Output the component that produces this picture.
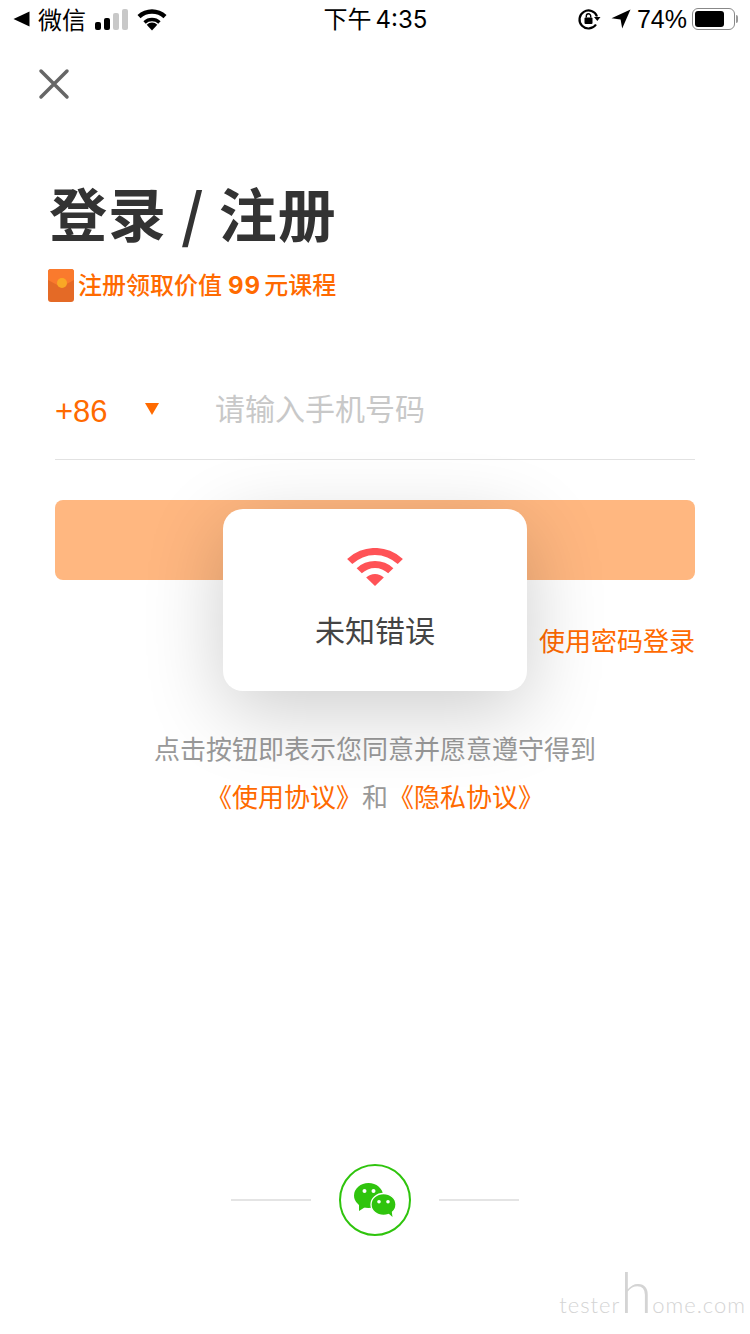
<div class="page">
	<header class="status">
		<div class="status-left">
			<svg class="back" width="17" height="16" viewBox="0 0 17 16"><path d="M16.500 0.500V15.500L0.500 8Z" fill="#000" /></svg>
			<span class="carrier">微信</span>
			<div class="signal"><i class="on h1"></i><i class="on h2"></i><i class="h3"></i><i class="h4"></i></div>
			<svg class="wifi" width="30" height="23" viewBox="0 0 30 23">
				<path d="M15 22.500 9.700 16.800a7.500 7.500 0 0 1 10.600 0Z" fill="#000" />
				<path d="M6.400 13.300a12.500 12.500 0 0 1 17.200 0l-2.300 2.500a9.200 9.200 0 0 0-12.600 0Z" fill="#000" />
				<path d="M0.500 7a21 21 0 0 1 29 0l-3 3.200a17 17 0 0 0-23 0Z" fill="#000" />
			</svg>
		</div>
		<div class="clock">下午<span>4:35</span></div>
		<div class="status-right">
			<svg class="rotate" width="24" height="24" viewBox="0 0 24 24">
				<path d="M20 9.500A9 9 0 1 0 19 17.500" fill="none" stroke="#000" stroke-width="2.200" />
				<path d="M17 10h6.500l-3.200 4Z" fill="#000" />
				<rect x="7.500" y="10.500" width="8" height="6.500" rx="1" fill="#000" />
				<path d="M9.300 10.500V9a2.200 2.200 0 0 1 4.400 0v1.500" fill="none" stroke="#000" stroke-width="1.400" />
			</svg>
			<svg class="loc" width="20" height="20" viewBox="0 0 20 20"><path d="M19.500 0.500 0.500 9.200 9.600 10.600 11.200 19.600Z" fill="#000" /></svg>
			<span class="pct">74%</span>
			<div class="battery"><div class="level"></div></div>
			<div class="nub"></div>
		</div>
	</header>

	<button class="close" aria-label="关闭">
		<svg width="32" height="32" viewBox="0 0 32 32">
			<path d="M3 3 29 29M29 3 3 29" stroke="#666" stroke-width="3.500" stroke-linecap="round" fill="none" />
		</svg>
	</button>

	<h1>登录 / 注册</h1>
	<div class="promo">
		<svg class="packet" width="26" height="33" viewBox="0 0 26 33">
			<rect width="26" height="33" rx="3" fill="#e46a26" />
			<path d="M0 11V3a3 3 0 0 1 3-3h20a3 3 0 0 1 3 3v8L13 18Z" fill="#fa7a2d" />
			<circle cx="14" cy="14" r="5" fill="#f9a825" />
		</svg>
		<span>注册领取价值<b>99</b>元课程</span>
	</div>

	<main class="form">
		<div class="phone">
			<span class="code">+86</span>
			<span class="caret"></span>
			<span class="placeholder">请输入手机号码</span>
		</div>
		<div class="submit"></div>
		<div class="pwd">使用密码登录</div>
		<div class="terms">
			<p>点击按钮即表示您同意并愿意遵守得到</p>
			<p><span class="link">《使用协议》</span>和<span class="link">《隐私协议》</span></p>
		</div>
	</main>

	<footer class="social">
		<div class="rule"></div>
		<div class="wechat">
			<svg width="42" height="34" viewBox="0 0 42 34">
				<ellipse cx="14.500" cy="12.500" rx="14.500" ry="12.500" fill="#2fc40d" />
				<path d="M5 21 5 28 12 23.500Z" fill="#2fc40d" />
				<ellipse cx="29.500" cy="21.500" rx="12.500" ry="11" fill="#2fc40d" stroke="#fff" stroke-width="1.300" />
				<path d="M34 30 38.500 34 37.500 27Z" fill="#2fc40d" />
				<circle cx="10.500" cy="8" r="2" fill="#fff" />
				<circle cx="19.500" cy="8" r="2" fill="#fff" />
				<circle cx="25" cy="18.700" r="1.800" fill="#fff" />
				<circle cx="34" cy="18.700" r="1.800" fill="#fff" />
			</svg>
		</div>
		<div class="rule"></div>
	</footer>

	<div class="mark">tester<span>h</span>ome.com</div>

	<div class="toast">
		<svg width="56" height="38" viewBox="1 0 54 38" preserveAspectRatio="none">
			<path d="M28 38 19.500 29.500a12 12 0 0 1 17 0Z" fill="#ff5256" />
			<path d="M10.300 20.300a25 25 0 0 1 35.400 0l-5 5a18 18 0 0 0-25.400 0Z" fill="#ff5256" />
			<path d="M1.100 11.100a38 38 0 0 1 53.800 0l-5 5a31 31 0 0 0-43.800 0Z" fill="#ff5256" />
		</svg>
		<div class="toast-text">未知错误</div>
	</div>
</div>

<style>
	:global(body) {
		margin: 0;
		background: #fff;
	}

	.page {
		position: relative;
		width: 750px;
		height: 1334px;
		overflow: hidden;
		background: #fff;
		font-family: "Noto Sans CJK SC", "Noto Sans", sans-serif;
	}

	.status {
		display: flex;
		justify-content: space-between;
		align-items: center;
		box-sizing: border-box;
		height: 40px;
		padding: 0 12px 2px 13px;
		color: #000;
		font-size: 24px;
	}

	.status-left,
	.status-right {
		display: flex;
		align-items: center;
		width: 230px;
	}

	.status-right {
		justify-content: flex-end;
	}

	.carrier {
		margin-left: 8px;
		line-height: 38px;
	}

	.signal {
		display: flex;
		align-items: flex-end;
		gap: 3px;
		height: 21px;
		margin-left: 9px;
	}

	.signal i {
		display: block;
		width: 6px;
		border-radius: 2px;
		background: #c8c8c8;
	}

	.signal .on {
		background: #000;
	}

	.h1 {
		height: 8px;
	}

	.h2 {
		height: 12px;
	}

	.h3 {
		height: 17px;
	}

	.h4 {
		height: 21px;
	}

	.wifi {
		margin-left: 9px;
	}

	.clock {
		font-size: 24px;
		line-height: 38px;
	}

	.clock span {
		margin-left: 4px;
		font-family: "Inter", "Liberation Sans", sans-serif;
	}

	.loc {
		margin-left: 10px;
	}

	.pct {
		margin-left: 6px;
		font-family: "Liberation Sans", sans-serif;
		font-size: 25px;
	}

	.battery {
		box-sizing: border-box;
		width: 43px;
		height: 22px;
		margin-left: 5px;
		padding: 2px;
		border: 1.500px solid #888;
		border-radius: 6px;
	}

	.level {
		width: 29px;
		height: 100%;
		border-radius: 3px;
		background: #000;
	}

	.nub {
		width: 2px;
		height: 8px;
		margin-left: 1px;
		border-radius: 0 2px 2px 0;
		background: #999;
	}

	.close {
		display: block;
		width: 32px;
		height: 32px;
		margin: 28px 0 0 38px;
		padding: 0;
		border: 0;
		background: none;
	}

	h1 {
		margin: 72px 0 0 49px;
		color: #333;
		font-size: 58px;
		font-weight: 700;
		line-height: 80px;
		letter-spacing: 1px;
		white-space: pre;
	}

	.promo {
		display: flex;
		align-items: center;
		gap: 4px;
		margin: 15px 0 0 48px;
		color: #ff6a00;
		font-size: 24px;
		font-weight: 500;
		line-height: 34px;
	}

	.promo b {
		margin: 0 3px 0 6px;
		font-family: "Inter", sans-serif;
		font-weight: 700;
		letter-spacing: 1px;
	}

	.form {
		margin: 76px 55px 0;
	}

	.phone {
		display: flex;
		align-items: center;
		height: 60px;
		padding-bottom: 20px;
		border-bottom: 1px solid #e2e2e2;
	}

	.code {
		width: 90px;
		margin-top: 6px;
		color: #ff6a00;
		font-family: "Liberation Sans", sans-serif;
		font-size: 31px;
	}

	.caret {
		width: 0;
		height: 0;
		border-top: 12px solid #ff6a00;
		border-left: 7.500px solid transparent;
		border-right: 7.500px solid transparent;
	}

	.placeholder {
		margin: -4px 0 0 56px;
		color: #c8c8c8;
		font-size: 30px;
	}

	.submit {
		height: 80px;
		margin-top: 40px;
		border-radius: 8px;
		background: #ffb780;
	}

	.pwd {
		margin-top: 41px;
		color: #ff6a00;
		font-size: 26px;
		line-height: 38px;
		text-align: right;
	}

	.terms {
		margin-top: 65px;
		color: #999;
		font-size: 26px;
		text-align: center;
	}

	.terms p {
		margin: 0;
		line-height: 48px;
	}

	.link {
		color: #ff6a00;
	}

	.social {
		position: absolute;
		left: 0;
		right: 0;
		top: 1164px;
		display: flex;
		justify-content: center;
		align-items: center;
		gap: 28px;
	}

	.rule {
		width: 80px;
		height: 2px;
		background: #e4e4e4;
	}

	.wechat {
		display: flex;
		justify-content: center;
		align-items: center;
		box-sizing: border-box;
		width: 72px;
		height: 72px;
		border: 2px solid #2fc40d;
		border-radius: 50%;
	}

	.mark {
		position: absolute;
		right: 4px;
		bottom: 14px;
		color: #d4d4d4;
		font-family: "Lato", sans-serif;
		font-size: 22px;
		font-weight: 300;
		letter-spacing: 1px;
		line-height: 30px;
	}

	.mark span {
		font-size: 58px;
		line-height: 30px;
		letter-spacing: 0;
	}

	.toast {
		position: absolute;
		left: 223px;
		top: 509px;
		display: flex;
		flex-direction: column;
		align-items: center;
		box-sizing: border-box;
		width: 304px;
		height: 182px;
		padding-top: 39px;
		border-radius: 20px;
		background: #fff;
		box-shadow: 0 20px 80px rgba(0, 0, 0, 0.2);
	}

	.toast-text {
		margin-top: 21px;
		color: #444;
		font-size: 30px;
		line-height: 44px;
	}
</style>
